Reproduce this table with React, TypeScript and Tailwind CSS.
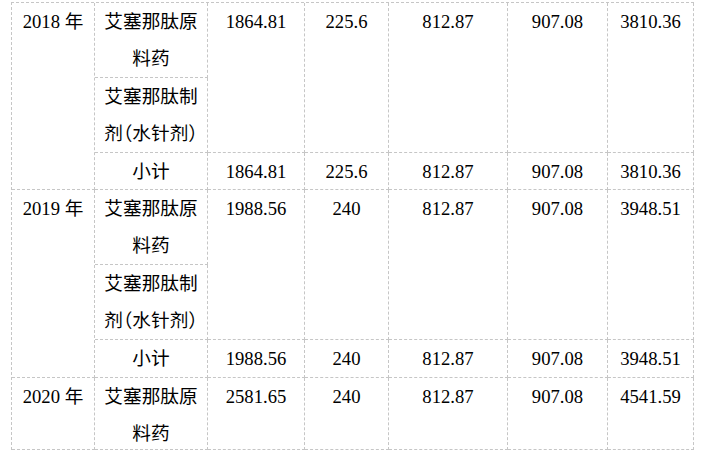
const cell = "border-r border-b border-dashed border-[#c6c6c6] text-center leading-[37px]";

const groups = [
  {
    year: "2018",
    first: ["艾塞那肽原", "料药"],
    second: ["艾塞那肽制", "剂（水针剂）"],
    values: ["1864.81", "225.6", "812.87", "907.08", "3810.36"],
  },
  {
    year: "2019",
    first: ["艾塞那肽原", "料药"],
    second: ["艾塞那肽制", "剂（水针剂）"],
    values: ["1988.56", "240", "812.87", "907.08", "3948.51"],
  },
];

function Lines({ lines }: { lines: string[] }) {
  return (
    <>
      {lines.map((l, i) => (
        <div key={i} className="[font-feature-settings:'halt']">
          {l}
        </div>
      ))}
    </>
  );
}

export default function App() {
  return (
    <div
      className="w-[710px] h-[456px] bg-white text-black text-[18.67px] pt-[2px] pl-[11px]"
      style={{ fontFamily: '"Liberation Serif", "Noto Sans CJK SC", serif' }}
    >
      <div className="grid w-max grid-cols-[83px_113px_97px_84px_119px_100px_86px] grid-rows-[75px_75px_37px_75px_75px_38px_72px] border-l border-t border-dashed border-[#c6c6c6]">
        {groups.map((g) => (
          <>
            <div key={g.year + "y"} className={`${cell} row-span-3`}>
              {g.year} 年
            </div>
            <div className={cell}>
              <Lines lines={g.first} />
            </div>
            {g.values.map((v, i) => (
              <div key={g.year + "a" + i} className={`${cell} row-span-2`}>
                {v}
              </div>
            ))}
            <div className={cell}>
              <Lines lines={g.second} />
            </div>
            <div className={cell}>小计</div>
            {g.values.map((v, i) => (
              <div key={g.year + "b" + i} className={cell}>
                {v}
              </div>
            ))}
          </>
        ))}
        <div className={cell}>2020 年</div>
        <div className={cell}>
          <Lines lines={["艾塞那肽原", "料药"]} />
        </div>
        {["2581.65", "240", "812.87", "907.08", "4541.59"].map((v, i) => (
          <div key={"c" + i} className={cell}>
            {v}
          </div>
        ))}
      </div>
    </div>
  );
}
